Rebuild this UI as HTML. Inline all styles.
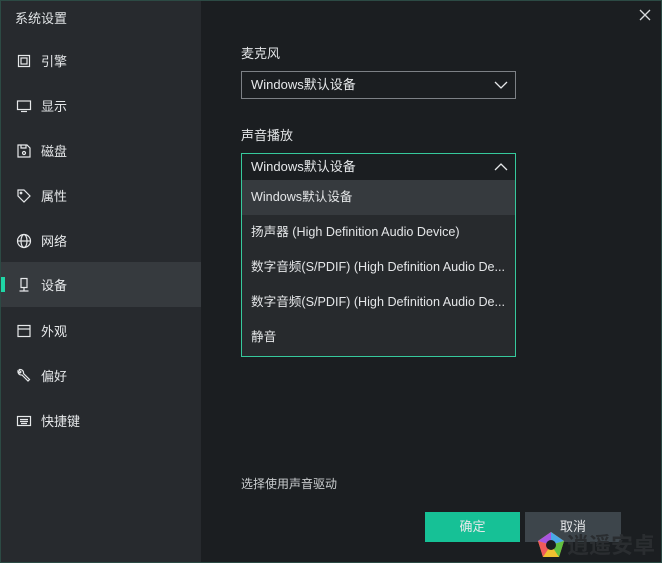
<!DOCTYPE html>
<html><head><meta charset="utf-8"><style>
*{margin:0;padding:0;box-sizing:border-box}
html,body{width:662px;height:563px;overflow:hidden}
body{background:#1b1e21;font-family:"Liberation Sans","Noto Sans CJK SC",sans-serif;color:#e6e8ea;font-size:13px;position:relative}
.frame{position:absolute;left:0;top:0;width:662px;height:563px;border:1px solid #2c4a44;pointer-events:none;z-index:9}
.side{position:absolute;left:0;top:0;width:201px;height:563px;background:#272a2e}
.title{position:absolute;left:15px;top:8px;font-size:13px;color:#dfe2e4}
.item{position:absolute;left:0;width:201px;height:45px;display:flex;align-items:center;font-size:13px}
.item svg{position:absolute;left:16px}
.item span{position:absolute;left:41px}
.sel{background:#363a3e}
.sel:before{content:"";position:absolute;left:1px;top:15px;width:4px;height:15px;background:#1fd6a6}
.lbl{position:absolute;left:241px;font-size:13px;color:#e2e4e6}
.box{position:absolute;left:241px;width:275px;height:28px;border:1px solid #7d8186;background:#1b1e21;padding-left:9px;line-height:26px;font-size:13px}
.box.open{border-color:#36c99c}
.box svg{position:absolute;right:7px;top:8px}
.dd{position:absolute;left:241px;top:180px;width:275px;height:177px;border:1px solid #36c99c;border-top:none;background:#272a2d;overflow:hidden}
.dd div{height:35px;line-height:35px;padding-left:9px;font-size:12.6px;white-space:nowrap;overflow:hidden;color:#e4e6e8}
.dd .hl{background:#363a3e}
.btn{position:absolute;top:512px;height:30px;width:96px;text-align:center;line-height:30px;font-size:13px}
</style></head><body>
<div class="side">
<div class="title">系统设置</div>
<div class="item" style="top:38px"><svg width="16" height="16" viewBox="0 0 16 16" fill="none" stroke="#e6e8ea" stroke-width="1.2"><rect x="2.5" y="2.5" width="11" height="11"/><rect x="5" y="5" width="6" height="6"/></svg><span>引擎</span></div>
<div class="item" style="top:83px"><svg width="16" height="16" viewBox="0 0 16 16" fill="none" stroke="#e6e8ea" stroke-width="1.2"><rect x="1.5" y="3" width="13" height="8.5"/><path d="M5 13.5h6"/></svg><span>显示</span></div>
<div class="item" style="top:128px"><svg width="16" height="16" viewBox="0 0 16 16" fill="none" stroke="#e6e8ea" stroke-width="1.2"><path d="M2 2h9l3 3v9H2z"/><path d="M5 2v3h5V2"/><circle cx="8" cy="10" r="1.5"/></svg><span>磁盘</span></div>
<div class="item" style="top:173px"><svg width="16" height="16" viewBox="0 0 16 16" fill="none" stroke="#e6e8ea" stroke-width="1.2"><path d="M2 2h6l6 6-6 6-6-6z"/><circle cx="5" cy="5" r="0.8"/></svg><span>属性</span></div>
<div class="item" style="top:218px"><svg width="16" height="16" viewBox="0 0 16 16" fill="none" stroke="#e6e8ea" stroke-width="1.2"><circle cx="8" cy="8" r="6.5"/><ellipse cx="8" cy="8" rx="3" ry="6.5"/><path d="M1.5 8h13"/></svg><span>网络</span></div>
<div class="item sel" style="top:262px"><svg width="16" height="16" viewBox="0 0 16 16" fill="none" stroke="#e6e8ea" stroke-width="1.2"><rect x="5" y="1.5" width="6" height="9"/><path d="M8 10.5v3M3.5 14h9"/></svg><span>设备</span></div>
<div class="item" style="top:308px"><svg width="16" height="16" viewBox="0 0 16 16" fill="none" stroke="#e6e8ea" stroke-width="1.2"><rect x="2" y="2.5" width="12" height="11"/><path d="M2 6h12"/></svg><span>外观</span></div>
<div class="item" style="top:353px"><svg width="16" height="16" viewBox="0 0 16 16" fill="none" stroke="#e6e8ea" stroke-width="1.2"><path d="M3 2l2 2-1 1-2-2a3.5 3.5 0 0 0 4 4l6 6 1.5-1.5-6-6a3.5 3.5 0 0 0-4-4z"/></svg><span>偏好</span></div>
<div class="item" style="top:398px"><svg width="16" height="16" viewBox="0 0 16 16" fill="none" stroke="#e6e8ea" stroke-width="1.2"><rect x="1.5" y="3.5" width="13" height="9"/><path d="M4 6.5h8M4 8.5h8M5 10.5h6"/></svg><span>快捷键</span></div>
</div>
<svg style="position:absolute;left:639px;top:9px" width="12" height="12" viewBox="0 0 12 12" stroke="#d8dadc" stroke-width="1.3"><path d="M1 1l10 10M11 1L1 11"/></svg>
<div class="lbl" style="top:43px">麦克风</div>
<div class="box" style="top:71px">Windows默认设备<svg width="14" height="10" viewBox="0 0 14 10" fill="none" stroke="#e6e8ea" stroke-width="1.3"><path d="M1 2l6 6 6-6"/></svg></div>
<div class="lbl" style="top:125px">声音播放</div>
<div class="box open" style="top:153px">Windows默认设备<svg width="14" height="10" viewBox="0 0 14 10" fill="none" stroke="#e6e8ea" stroke-width="1.3"><path d="M1 8l6-6 6 6"/></svg></div>
<div class="dd">
<div class="hl">Windows默认设备</div>
<div>扬声器 (High Definition Audio Device)</div>
<div>数字音频(S/PDIF) (High Definition Audio De...</div>
<div>数字音频(S/PDIF) (High Definition Audio De...</div>
<div>静音</div>
</div>
<div class="lbl" style="top:475px;font-size:12px;color:#c9ccce">选择使用声音驱动</div>
<div class="btn" style="left:425px;background:#16c196;width:95px">确定</div>
<div class="btn" style="left:525px;background:#3d454b">取消</div>
<svg style="position:absolute;left:537px;top:531px" width="28" height="28" viewBox="0 0 28 28"><path d="M14 1l13 9-5 16H6L1 10z" fill="#f0c030"/><path d="M14 1l13 9-13 4z" fill="#4aa8e8"/><path d="M14 1L1 10l13 4z" fill="#a855e0"/><path d="M1 10l5 16 8-12z" fill="#f05a5a"/><path d="M27 10l-5 16-8-12z" fill="#60c040"/><circle cx="14" cy="14" r="5" fill="#1b1e21"/></svg>
<div style="position:absolute;left:567px;top:531px;width:95px;font-size:22px;line-height:30px;font-weight:bold;color:#2a2d30;white-space:nowrap;overflow:hidden">逍遥安卓</div>
<div class="frame"></div>
</body></html>
